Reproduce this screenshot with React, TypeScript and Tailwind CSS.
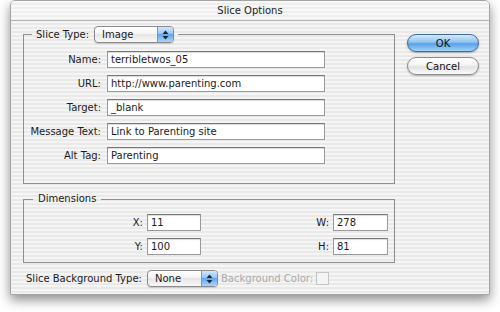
import React from "react";

const stripes =
  "bg-[repeating-linear-gradient(180deg,#f5f5f5_0px,#f5f5f5_2px,#e9e9e9_2px,#e9e9e9_4px)]";

function Arrows() {
  return (
    <svg width="7" height="10" viewBox="0 0 7 10">
      <path d="M3.5 0.5 L6.5 4 L0.5 4 Z" fill="#1c2a3a" />
      <path d="M3.5 9.5 L6.5 6 L0.5 6 Z" fill="#1c2a3a" />
    </svg>
  );
}

function Popup({ label, w }: { label: string; w: string }) {
  return (
    <div
      className={`flex h-[17px] ${w} overflow-hidden rounded-[4px] border border-[#8a8a8a] bg-[linear-gradient(#ffffff,#f3f3f3_50%,#e6e6e6_50%,#f7f7f7)] shadow-[0_1px_1px_rgba(0,0,0,0.15)]`}
    >
      <span className="flex-1 pl-[7px] text-[10px] leading-[15px] text-[#1a1a1a]">{label}</span>
      <span className="flex w-[16px] items-center justify-center border-l border-[#6f97c4] bg-[linear-gradient(#d4e8fb,#8fc2f1_50%,#65a6e7_50%,#a9d5fa)]">
        <Arrows />
      </span>
    </div>
  );
}

function Field({ value, w }: { value: string; w: string }) {
  return (
    <div
      className={`h-[17px] ${w} border border-[#9a9a9a] border-t-[#767676] bg-white pl-[3px] text-[10px] leading-[15px] text-[#1a1a1a] shadow-[inset_0_1px_1px_rgba(0,0,0,0.15)]`}
    >
      {value}
    </div>
  );
}

function Row({ label, value }: { label: string; value: string }) {
  return (
    <div className="flex h-[17px] items-center">
      <span className="w-[77px] text-right text-[10px] text-[#1a1a1a]">{label}</span>
      <div className="ml-[6px]">
        <Field value={value} w="w-[218px]" />
      </div>
    </div>
  );
}

export default function App() {
  return (
    <div className="h-[312px] w-[500px] bg-white font-['DejaVu_Sans',sans-serif]">
      <div
        className={`ml-[10px] flex h-[295px] w-[480px] flex-col overflow-hidden rounded-t-[5px] border border-[#a4a4a4] ${stripes} shadow-[0_5px_12px_rgba(0,0,0,0.45)]`}
      >
        <div className="flex h-[20px] items-center justify-center border-b border-[#b4b4b4] bg-[repeating-linear-gradient(180deg,#f8f8f8_0px,#f8f8f8_2px,#eeeeee_2px,#eeeeee_4px)] text-[10px] text-[#222]">
          Slice Options
        </div>
        <div className="flex flex-1">
          <div className="flex flex-col pl-[12px] pt-[5px]">
            <fieldset className="w-[372px] border border-[#8e8e8e] pb-[19px] pt-[8px]">
              <legend className="ml-[8px] flex h-[17px] items-center px-[4px]">
                <span className="text-[10px] text-[#1a1a1a]">Slice Type:</span>
                <div className="ml-[5px]">
                  <Popup label="Image" w="w-[80px]" />
                </div>
              </legend>
              <div className="flex flex-col gap-[7px]">
                <Row label="Name:" value="terribletwos_05" />
                <Row label="URL:" value="http://www.parenting.com" />
                <Row label="Target:" value="_blank" />
                <Row label="Message Text:" value="Link to Parenting site" />
                <Row label="Alt Tag:" value="Parenting" />
              </div>
            </fieldset>
            <fieldset className="mt-[8px] w-[372px] border border-[#8e8e8e] pb-[7px] pr-[6px] pt-[8px]">
              <legend className="ml-[9px] h-[14px] px-[5px] text-[10px] leading-[14px] text-[#1a1a1a]">
                Dimensions
              </legend>
              <div className="flex flex-col gap-[7px]">
                <div className="flex h-[17px] items-center">
                  <span className="w-[119px] text-right text-[10px] text-[#1a1a1a]">X:</span>
                  <div className="ml-[4px]">
                    <Field value="11" w="w-[54px]" />
                  </div>
                  <span className="flex-1 text-right text-[10px] text-[#1a1a1a]">W:</span>
                  <div className="ml-[4px]">
                    <Field value="278" w="w-[55px]" />
                  </div>
                </div>
                <div className="flex h-[17px] items-center">
                  <span className="w-[119px] text-right text-[10px] text-[#1a1a1a]">Y:</span>
                  <div className="ml-[4px]">
                    <Field value="100" w="w-[54px]" />
                  </div>
                  <span className="flex-1 text-right text-[10px] text-[#1a1a1a]">H:</span>
                  <div className="ml-[4px]">
                    <Field value="81" w="w-[55px]" />
                  </div>
                </div>
              </div>
            </fieldset>
            <div className="mt-[7px] flex h-[17px] items-center">
              <span className="w-[124px] pl-[3px] text-[10px] text-[#1a1a1a]">Slice Background Type:</span>
              <Popup label="None" w="w-[71px]" />
              <span className="ml-[3px] text-[10px] text-[#a9a9a9]">Background Color:</span>
              <div className="ml-[3px] h-[13px] w-[13px] border border-[#c4c4c4] bg-[#f4f4f4]" />
            </div>
          </div>
          <div className="ml-[12px] flex flex-col gap-[5px] pt-[13px]">
            <div className="flex h-[18px] w-[72px] items-center justify-center rounded-full border border-[#40679a] bg-[linear-gradient(#d6eafc,#8fc3f1_45%,#5aa0e6_55%,#9fd4fb)] text-[10px] text-[#111] shadow-[0_1px_2px_rgba(0,0,0,0.3)]">
              OK
            </div>
            <div className="flex h-[18px] w-[72px] items-center justify-center rounded-full border border-[#8a8a8a] bg-[linear-gradient(#ffffff,#f4f4f4_45%,#e2e2e2_55%,#fbfbfb)] text-[10px] text-[#111] shadow-[0_1px_2px_rgba(0,0,0,0.25)]">
              Cancel
            </div>
          </div>
        </div>
      </div>
    </div>
  );
}
